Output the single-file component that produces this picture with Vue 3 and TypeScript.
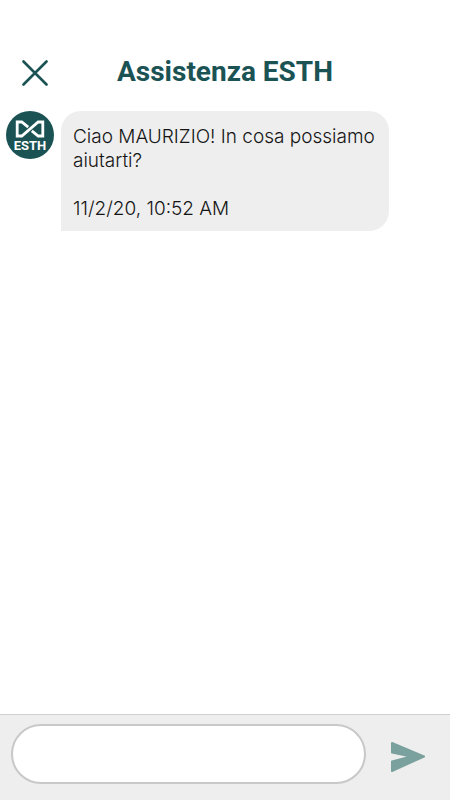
<script setup lang="ts">
import { ref } from 'vue'

interface Message {
  id: number
  text: string
  time: string
}

const messages = ref<Message[]>([
  { id: 1, text: 'Ciao MAURIZIO! In cosa possiamo aiutarti?', time: '11/2/20, 10:52 AM' },
])
const draft = ref('')

function send() {
  const text = draft.value.trim()
  if (!text) return
  messages.value.push({ id: messages.value.length + 1, text, time: new Date().toLocaleString('en-US') })
  draft.value = ''
}
</script>

<template>
  <div class="chat">
    <header class="header">
      <button class="close" type="button" aria-label="Chiudi">
        <svg width="26" height="26" viewBox="0 0 26 26" aria-hidden="true">
          <path d="M1.5 1.5 24.5 24.5M24.5 1.5 1.5 24.5" />
        </svg>
      </button>
      <h1 class="title">Assistenza ESTH</h1>
    </header>

    <main class="messages">
      <article v-for="m in messages" :key="m.id" class="message">
        <div class="avatar">
          <svg width="30" height="18" viewBox="0 0 30 18" aria-hidden="true">
            <path d="M13.2 7.2 6.8 2H2.2V16H6.8L23.2 2H27.8V16H23.2L16.8 10.8" />
          </svg>
          <span class="brand">ESTH</span>
        </div>
        <div class="bubble">
          <p class="text">{{ m.text }}</p>
          <time class="text">{{ m.time }}</time>
        </div>
      </article>
    </main>

    <form class="composer" @submit.prevent="send">
      <input v-model="draft" class="field" type="text" aria-label="Messaggio" />
      <button class="send" type="submit" aria-label="Invia">
        <svg width="36" height="32" viewBox="0 0 36 32" aria-hidden="true">
          <path d="M2 2 34 15.5 2 30V20.5L21 15.5 2 11.5Z" />
        </svg>
      </button>
    </form>
  </div>
</template>

<style>
body {
  margin: 0;
  background: #fff;
}
</style>

<style scoped>
.chat {
  display: flex;
  flex-direction: column;
  min-height: 100vh;
  font-family: Inter, "Liberation Sans", sans-serif;
  color: #151515;
}

.header {
  display: grid;
  grid-template-columns: 48px 1fr 48px;
  align-items: center;
  padding: 48px 10px 15px;
}

.close {
  display: flex;
  align-items: center;
  justify-content: center;
  height: 48px;
  padding: 2px 0 0 2px;
  border: 0;
  background: none;
}

.close path {
  fill: none;
  stroke: #1b5355;
  stroke-width: 2.6;
  stroke-linecap: round;
}

.title {
  margin: 0;
  font-family: Roboto, sans-serif;
  font-size: 28px;
  font-weight: 700;
  line-height: 48px;
  text-align: center;
  white-space: nowrap;
  color: #1b5355;
}

.messages {
  flex: 1;
}

.message {
  display: flex;
  align-items: flex-start;
  gap: 7px;
  padding: 0 6px;
}

.avatar {
  display: flex;
  flex: none;
  flex-direction: column;
  align-items: center;
  box-sizing: border-box;
  width: 48px;
  height: 48px;
  padding-top: 9px;
  border-radius: 50%;
  background: #1b5355;
}

.avatar path {
  fill: none;
  stroke: #fff;
  stroke-width: 2.8;
}

.brand {
  font-family: Roboto, sans-serif;
  font-size: 13px;
  font-weight: 700;
  line-height: 16px;
  color: #fff;
}

.bubble {
  display: flex;
  flex-direction: column;
  gap: 24px;
  max-width: 304px;
  padding: 14px 12px 10px;
  border-radius: 20px 20px 20px 0;
  background: #eee;
}

.text {
  margin: 0;
  font-size: 19px;
  font-weight: 300;
  line-height: 24px;
}

.composer {
  display: flex;
  align-items: center;
  gap: 24px;
  padding: 9px 24px 16px 11px;
  border-top: 1px solid #d0d0d0;
  background: #eee;
}

.field {
  flex: 1;
  box-sizing: border-box;
  min-width: 0;
  height: 60px;
  padding: 0 24px;
  border: 2px solid #c8c8c8;
  border-radius: 30px;
  background: #fff;
  font: inherit;
  font-size: 18px;
  outline: none;
}

.send {
  display: flex;
  padding: 6px 0 0;
  border: 0;
  background: none;
}

.send path {
  fill: #7aa19d;
  stroke: #7aa19d;
  stroke-width: 2;
  stroke-linejoin: round;
}
</style>
